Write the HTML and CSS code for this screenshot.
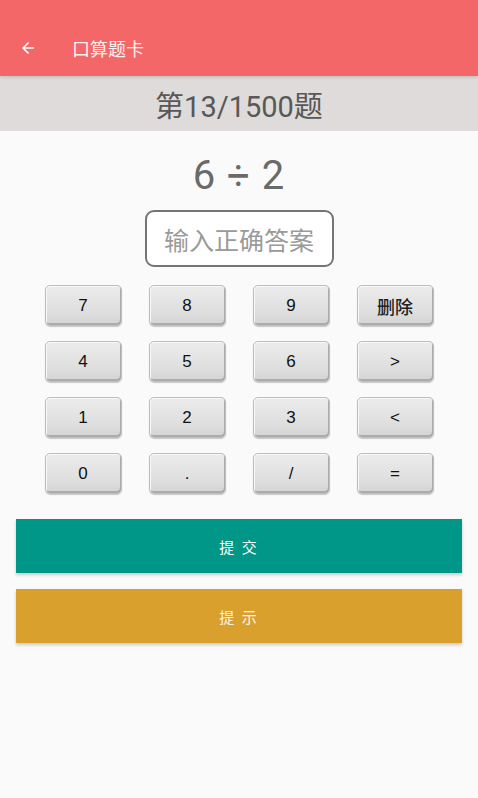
FILE: index.html
```html
<!DOCTYPE html>
<html lang="zh">
<head>
<meta charset="utf-8">
<title>口算题卡</title>
<link rel="stylesheet" href="styles.css">
</head>
<body>
<div class="app">
  <header class="toolbar">
    <svg class="back" width="18" height="18" viewBox="0 0 24 24"><path d="M20 11H7.83l5.59-5.59L12 4l-8 8 8 8 1.41-1.41L7.83 13H20v-2z" fill="#fff"/></svg>
    <span class="title">口算题卡</span>
  </header>
  <div class="progress">第13/1500题</div>
  <main class="content">
    <div class="question">6 ÷ 2</div>
    <div class="answer">输入正确答案</div>
    <div class="keypad">
      <button class="key">7</button><button class="key">8</button><button class="key">9</button><button class="key cn">删除</button>
      <button class="key">4</button><button class="key">5</button><button class="key">6</button><button class="key">&gt;</button>
      <button class="key">1</button><button class="key">2</button><button class="key">3</button><button class="key">&lt;</button>
      <button class="key">0</button><button class="key">.</button><button class="key">/</button><button class="key">=</button>
    </div>
    <button class="action submit">提 交</button>
    <button class="action hint">提 示</button>
  </main>
</div>
</body>
</html>
```
FILE: styles.css
```css
* { box-sizing: border-box; }
html, body { margin: 0; padding: 0; }
body {
  font-family: Roboto, "Noto Sans CJK SC", "Noto Sans", sans-serif;
  background: #fafafa;
  width: 478px;
  height: 798px;
  overflow: hidden;
}
.toolbar {
  height: 76px;
  background: #f36768;
  display: flex;
  align-items: center;
  padding: 20px 0 0 19px;
  color: #fff;
  position: relative;
  z-index: 1;
  box-shadow: 0 1px 3px rgba(0,0,0,0.15);
}
.back { flex: none; }
.title {
  margin-left: 35px;
  font-size: 18px;
  color: #fdf0f0;
}
.progress {
  height: 55px;
  background: #dedbda;
  color: #585858;
  font-size: 29px;
  display: flex;
  align-items: center;
  justify-content: center;
}
.content {
  display: flex;
  flex-direction: column;
  align-items: center;
  padding-top: 18px;
}
.question {
  font-size: 40px;
  color: #6a6a6a;
  line-height: 54px;
  height: 54px;
  letter-spacing: 1px;
}
.answer {
  margin-top: 7px;
  width: 189px;
  height: 57px;
  border: 2px solid #757575;
  border-radius: 9px;
  background: #fff;
  color: #9a9a9a;
  font-size: 25px;
  display: flex;
  align-items: center;
  justify-content: center;
}
.keypad {
  margin-top: 18px;
  display: grid;
  grid-template-columns: repeat(4, 77px);
  column-gap: 27px;
  row-gap: 15px;
}
.key {
  height: 41px;
  border: 1px solid #bdbdbd;
  border-radius: 5px;
  background: linear-gradient(180deg, #ececec 0%, #e0e0e0 60%, #d4d4d4 100%);
  box-shadow: inset 1px 1px 0 #f8f8f8, inset -1px -2px 0 #ababab, 0 1px 1px rgba(0,0,0,0.2);
  font-family: "Liberation Sans", Arial, sans-serif;
  font-size: 17px;
  color: #111;
  padding: 0;
  display: flex;
  align-items: center;
  justify-content: center;
}
.key.cn {
  font-family: "Noto Sans CJK SC", sans-serif;
  font-size: 18px;
  font-weight: 500;
  color: #222;
}
.action {
  width: 446px;
  height: 54px;
  border: none;
  color: #fff;
  font-family: "Noto Sans CJK SC", sans-serif;
  font-size: 15px;
  letter-spacing: 2px;
  box-shadow: 0 2px 3px rgba(0,0,0,0.2);
  padding: 0;
}
.submit {
  margin-top: 25px;
  background: #009688;
}
.hint {
  margin-top: 16px;
  background: #d9a02e;
  color: #fdf3e0;
}
```
